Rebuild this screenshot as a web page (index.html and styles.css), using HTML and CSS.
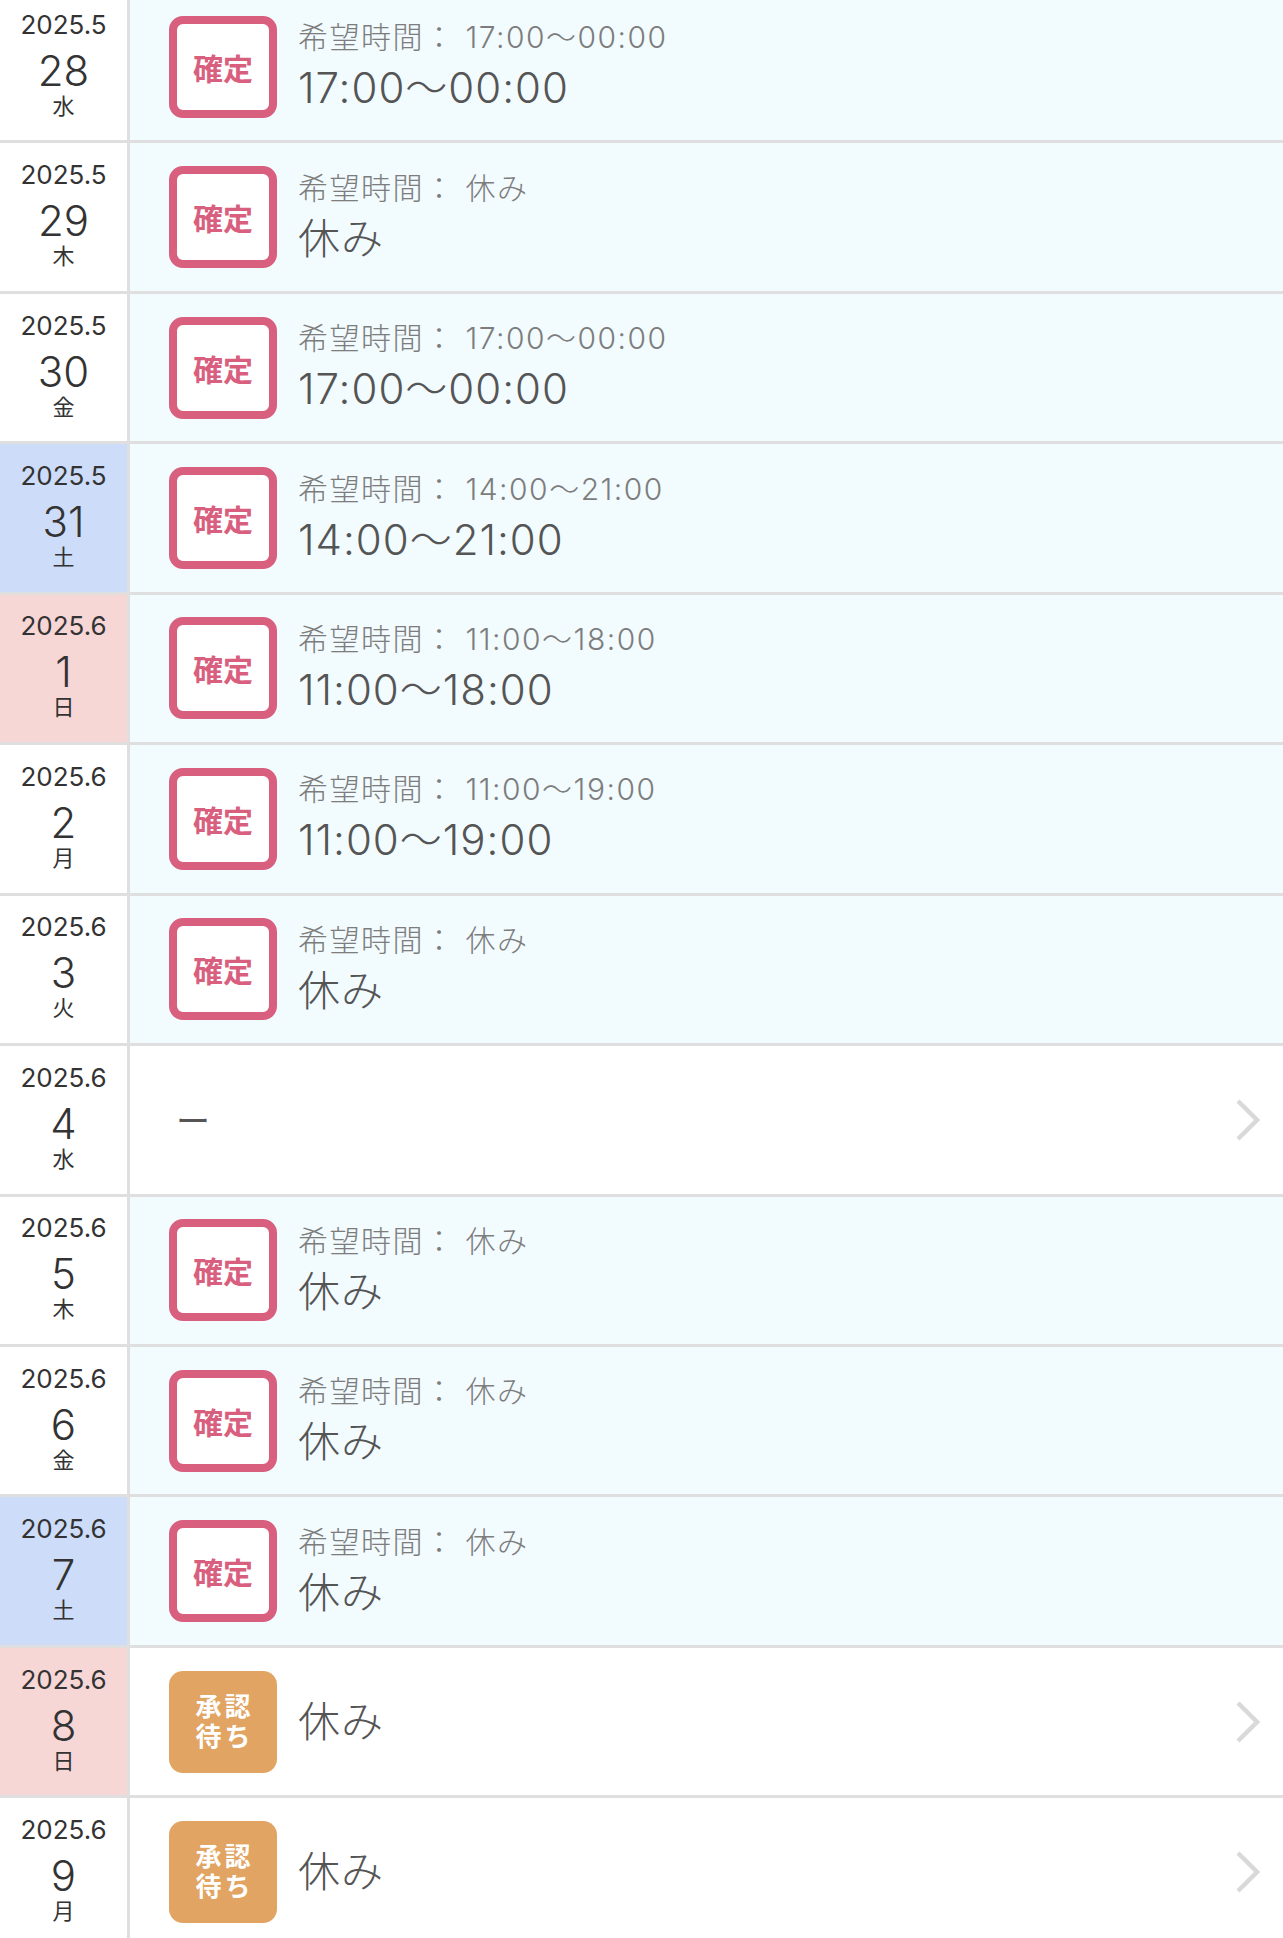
FILE: index.html
```html
<!DOCTYPE html>
<html lang="ja">
  <head>
    <meta charset="UTF-8" />
    <title>シフト一覧</title>
    <link rel="stylesheet" href="styles.css">
  </head>
  <body>
    <div class="shift-list">
      <div class="day fixed">
        <div class="date"><span class="ym">2025.5</span><span class="dd">28</span><span class="wd">水</span></div>
        <div class="body">
          <span class="badge badge-fixed">確定</span>
          <div class="times">
            <p class="wish">希望時間： 17:00〜00:00</p>
            <p class="shift">17:00〜00:00</p>
          </div>
        </div>
      </div>

      <div class="day fixed">
        <div class="date"><span class="ym">2025.5</span><span class="dd">29</span><span class="wd">木</span></div>
        <div class="body">
          <span class="badge badge-fixed">確定</span>
          <div class="times">
            <p class="wish">希望時間： 休み</p>
            <p class="shift">休み</p>
          </div>
        </div>
      </div>

      <div class="day fixed">
        <div class="date"><span class="ym">2025.5</span><span class="dd">30</span><span class="wd">金</span></div>
        <div class="body">
          <span class="badge badge-fixed">確定</span>
          <div class="times">
            <p class="wish">希望時間： 17:00〜00:00</p>
            <p class="shift">17:00〜00:00</p>
          </div>
        </div>
      </div>

      <div class="day fixed">
        <div class="date sat"><span class="ym">2025.5</span><span class="dd">31</span><span class="wd">土</span></div>
        <div class="body">
          <span class="badge badge-fixed">確定</span>
          <div class="times">
            <p class="wish">希望時間： 14:00〜21:00</p>
            <p class="shift">14:00〜21:00</p>
          </div>
        </div>
      </div>

      <div class="day fixed">
        <div class="date sun"><span class="ym">2025.6</span><span class="dd">1</span><span class="wd">日</span></div>
        <div class="body">
          <span class="badge badge-fixed">確定</span>
          <div class="times">
            <p class="wish">希望時間： 11:00〜18:00</p>
            <p class="shift">11:00〜18:00</p>
          </div>
        </div>
      </div>

      <div class="day fixed">
        <div class="date"><span class="ym">2025.6</span><span class="dd">2</span><span class="wd">月</span></div>
        <div class="body">
          <span class="badge badge-fixed">確定</span>
          <div class="times">
            <p class="wish">希望時間： 11:00〜19:00</p>
            <p class="shift">11:00〜19:00</p>
          </div>
        </div>
      </div>

      <div class="day fixed">
        <div class="date"><span class="ym">2025.6</span><span class="dd">3</span><span class="wd">火</span></div>
        <div class="body">
          <span class="badge badge-fixed">確定</span>
          <div class="times">
            <p class="wish">希望時間： 休み</p>
            <p class="shift">休み</p>
          </div>
        </div>
      </div>

      <div class="day">
        <div class="date"><span class="ym">2025.6</span><span class="dd">4</span><span class="wd">水</span></div>
        <div class="body">
          <span class="empty">ー</span>
          <svg class="chevron" width="25" height="42" viewBox="0 0 25 42"><polyline points="3,2 22,21 3,40" /></svg>
        </div>
      </div>

      <div class="day fixed">
        <div class="date"><span class="ym">2025.6</span><span class="dd">5</span><span class="wd">木</span></div>
        <div class="body">
          <span class="badge badge-fixed">確定</span>
          <div class="times">
            <p class="wish">希望時間： 休み</p>
            <p class="shift">休み</p>
          </div>
        </div>
      </div>

      <div class="day fixed">
        <div class="date"><span class="ym">2025.6</span><span class="dd">6</span><span class="wd">金</span></div>
        <div class="body">
          <span class="badge badge-fixed">確定</span>
          <div class="times">
            <p class="wish">希望時間： 休み</p>
            <p class="shift">休み</p>
          </div>
        </div>
      </div>

      <div class="day fixed">
        <div class="date sat"><span class="ym">2025.6</span><span class="dd">7</span><span class="wd">土</span></div>
        <div class="body">
          <span class="badge badge-fixed">確定</span>
          <div class="times">
            <p class="wish">希望時間： 休み</p>
            <p class="shift">休み</p>
          </div>
        </div>
      </div>

      <div class="day">
        <div class="date sun"><span class="ym">2025.6</span><span class="dd">8</span><span class="wd">日</span></div>
        <div class="body">
          <span class="badge badge-pending"><span>承認</span><span>待ち</span></span>
          <p class="shift">休み</p>
          <svg class="chevron" width="25" height="42" viewBox="0 0 25 42"><polyline points="3,2 22,21 3,40" /></svg>
        </div>
      </div>

      <div class="day">
        <div class="date"><span class="ym">2025.6</span><span class="dd">9</span><span class="wd">月</span></div>
        <div class="body">
          <span class="badge badge-pending"><span>承認</span><span>待ち</span></span>
          <p class="shift">休み</p>
          <svg class="chevron" width="25" height="42" viewBox="0 0 25 42"><polyline points="3,2 22,21 3,40" /></svg>
        </div>
      </div>
    </div>
  </body>
</html>
```

FILE: styles.css
```css
body {
  margin: 0;
  background-color: #fff;
  font-family: Inter, "Noto Sans CJK JP", sans-serif;
  font-weight: 300;
  color: #333;
}

p {
  margin: 0;
}

.shift-list {
  margin-top: -7px;
}

/* one row per day */
.day {
  display: flex;
  height: 150.45px;
  box-sizing: border-box;
  border-bottom: 3px solid #dfdfdf;
  background-color: #fff;
}
.day.fixed {
  background-color: #f2fbfe;
}

.date {
  display: flex;
  flex-direction: column;
  align-items: center;
  justify-content: center;
  width: 130px;
  flex-shrink: 0;
  padding-bottom: 6px;
  box-sizing: border-box;
  border-right: 3px solid #dfdfdf;
  background-color: #fff;
}
.date.sat {
  background-color: #cddcf8;
}
.date.sun {
  background-color: #f7d6d6;
}
.ym {
  font-size: 26px;
  line-height: 30px;
  font-weight: 400;
}
.dd {
  margin-top: 10px;
  font-size: 42px;
  line-height: 42px;
}
.wd {
  margin-top: 2px;
  font-size: 22px;
  line-height: 24px;
  font-weight: 400;
}

.body {
  display: flex;
  align-items: center;
  flex: 1;
  padding: 0 23px 0 39px;
}

.badge {
  display: flex;
  align-items: center;
  justify-content: center;
  width: 108px;
  height: 102px;
  box-sizing: border-box;
  border-radius: 14px;
  flex-shrink: 0;
  font-weight: bold;
  text-align: center;
}
.badge-fixed {
  border: 8px solid #d95f7f;
  background-color: #fff;
  color: #d95f7f;
  font-size: 30px;
}
.badge-pending {
  flex-direction: column;
  padding-left: 3px;
  background-color: #e1a463;
  color: #fff;
  font-family: "Liberation Sans", "Noto Sans CJK JP", sans-serif;
  font-size: 26px;
  line-height: 30px;
  letter-spacing: 3px;
}

.times {
  margin-left: 21px;
}
.wish {
  font-size: 30px;
  line-height: 42px;
  letter-spacing: 1.5px;
  color: #7d7d7d;
}
.shift {
  font-size: 42px;
  line-height: 59px;
  letter-spacing: 1px;
  color: #555;
}
.badge + .shift {
  margin-left: 21px;
}

.empty {
  margin-left: 7px;
  font-size: 34px;
  font-weight: 400;
  color: #555;
}

.chevron {
  margin-left: auto;
  fill: none;
  stroke: #d9d9d9;
  stroke-width: 4.5;
}
```
